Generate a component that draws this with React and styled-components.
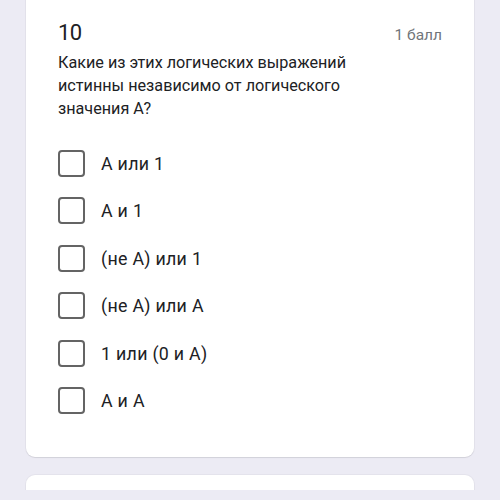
import React from 'react';
import styled, { createGlobalStyle } from 'styled-components';

const GlobalStyle = createGlobalStyle`
    html, body {
        margin: 0;
        padding: 0;
        background: #ecebf4;
    }
    body {
        font-family: Roboto, 'Noto Sans', sans-serif;
    }
`;

const Page = styled.div`
    width: 500px;
    height: 500px;
    overflow: hidden;
    display: flex;
    flex-direction: column;
    gap: 18px;
    padding: 0 26px;
    box-sizing: border-box;
    margin-top: -10px;
`;

const Card = styled.div`
    background: #ffffff;
    border-radius: 9px;
    box-shadow: 0 1px 1px rgba(0, 0, 0, 0.08), 0 0 0 1px rgba(0, 0, 0, 0.03);
    padding: 30px 32px 43px 32px;
    flex-shrink: 0;
    min-height: ${(p) => p.minHeight || 'auto'};
`;

const Header = styled.div`
    display: flex;
    justify-content: space-between;
    align-items: baseline;
`;

const Number = styled.div`
    font-size: 22px;
    color: #202124;
    letter-spacing: -0.5px;
`;

const Points = styled.div`
    font-size: 15.5px;
    color: #70757a;
`;

const Question = styled.div`
    margin-top: 6px;
    font-size: 16.2px;
    line-height: 23px;
    color: #202124;
    width: 320px;
`;

const Options = styled.div`
    margin-top: 30px;
    display: flex;
    flex-direction: column;
    gap: 20.4px;
`;

const Option = styled.label`
    display: flex;
    align-items: center;
    gap: 16px;
    font-size: 17.8px;
    letter-spacing: 0.3px;
    color: #202124;
`;

const Box = styled.span`
    width: 27px;
    height: 27px;
    box-sizing: border-box;
    border: 2.5px solid #646464;
    border-radius: 4px;
    flex-shrink: 0;
`;

const options = ['А или 1', 'А и 1', '(не А) или 1', '(не А) или А', '1 или (0 и А)', 'А и А'];

export default function App() {
    return (
        <>
            <GlobalStyle />
            <Page>
                <Card>
                    <Header>
                        <Number>10</Number>
                        <Points>1 балл</Points>
                    </Header>
                    <Question>
                        Какие из этих логических выражений истинны независимо от логического значения А?
                    </Question>
                    <Options>
                        {options.map((o) => (
                            <Option key={o}>
                                <Box />
                                {o}
                            </Option>
                        ))}
                    </Options>
                </Card>
                <Card minHeight="100px" />
            </Page>
        </>
    );
}
